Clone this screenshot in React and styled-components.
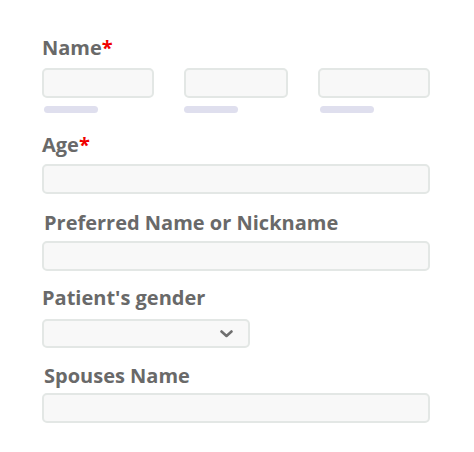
import React from 'react'
import styled, { createGlobalStyle } from 'styled-components'

const GlobalStyle = createGlobalStyle`
  body {
    margin: 0;
    background: #ffffff;
    font-family: 'Open Sans', 'Liberation Sans', sans-serif;
  }
`

const Form = styled.form`
  width: 388px;
  padding: 38px 0 0 42px;
`

const Field = styled.div`
  margin-top: ${ props => props.top || 0 }px;
`

const Label = styled.label`
  display: block;
  height: 20px;
  line-height: 20px;
  font-size: 20px;
  font-weight: 700;
  color: #696969;
  padding-left: ${ props => props.indent || 0 }px;
  margin-bottom: ${ props => props.gap || 10 }px;
  white-space: nowrap;
`

const Required = styled.span`
  color: #f00000;
`

const Input = styled.input`
  display: block;
  box-sizing: border-box;
  width: ${ props => props.width ? props.width + 'px' : '100%' };
  height: 30px;
  margin: 0;
  background: #f8f8f8;
  border: 2px solid #e3e7e5;
  border-radius: 5px;
  outline: none;
`

const NameRow = styled.div`
  display: flex;
  justify-content: space-between;
`

const NamePart = styled.div`
  display: flex;
  flex-direction: column;
  gap: 8px;
`

const HintBar = styled.div`
  width: 54px;
  height: 7px;
  margin-left: ${ props => props.offset || 0 }px;
  border-radius: 4px;
  background: #dfdfee;
`

const SelectBox = styled.div`
  box-sizing: border-box;
  width: 208px;
  height: 29px;
  display: flex;
  align-items: center;
  justify-content: flex-end;
  padding-right: 15px;
  background: #f8f8f8;
  border: 2px solid #e3e7e5;
  border-radius: 5px;
`

const Chevron = () => (
  <svg width="13" height="8" viewBox="0 0 13 8">
    <path d="M1.5 1.5 L6.5 6 L11.5 1.5" fill="none" stroke="#6f6f6f" strokeWidth="2.6" strokeLinecap="round" strokeLinejoin="round" />
  </svg>
)

const parts = [
  { width: 112, offset: 2 },
  { width: 104, offset: 0 },
  { width: 112, offset: 2 },
]

export default function App() {
  return (
    <>
      <GlobalStyle />
      <Form>
        <Field>
          <Label gap={ 10 }>Name<Required>*</Required></Label>
          <NameRow>
            { parts.map( ( p, i ) => (
              <NamePart key={ i }>
                <Input width={ p.width } />
                <HintBar offset={ p.offset } />
              </NamePart>
            ) ) }
          </NameRow>
        </Field>
        <Field top={ 22 }>
          <Label gap={ 9 }>Age<Required>*</Required></Label>
          <Input />
        </Field>
        <Field top={ 19 }>
          <Label indent={ 2 } gap={ 8 }>Preferred Name or Nickname</Label>
          <Input />
        </Field>
        <Field top={ 17 }>
          <Label gap={ 11 }>Patient's gender</Label>
          <SelectBox><Chevron /></SelectBox>
        </Field>
        <Field top={ 18 }>
          <Label indent={ 2 } gap={ 7 }>Spouses Name</Label>
          <Input />
        </Field>
      </Form>
    </>
  )
}
